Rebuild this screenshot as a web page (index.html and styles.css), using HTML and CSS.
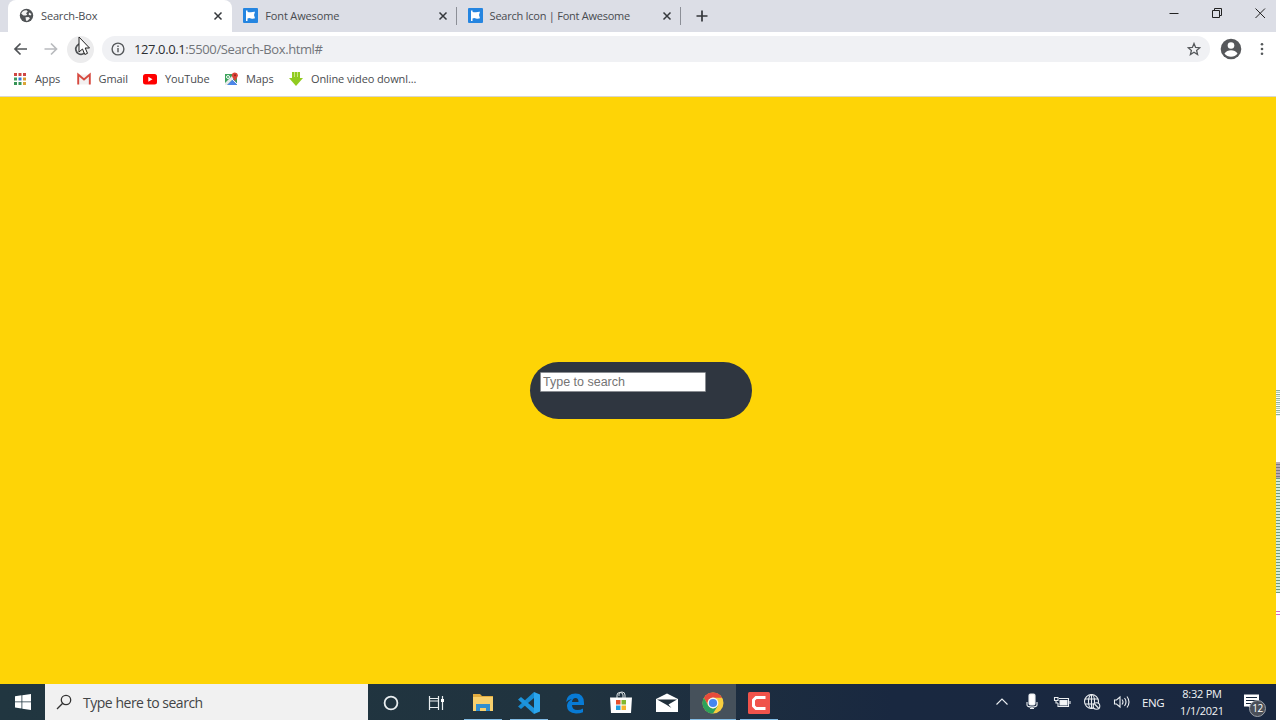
FILE: index.html
```html
<!DOCTYPE html>
<html lang="en">
<head>
<meta charset="utf-8">
<title>Search-Box</title>
<link rel="stylesheet" href="styles.css">
</head>
<body>
<div class="screen">
<div class="desktop">
  <header class="tabstrip">
    <div class="tab active">
      <svg class="fav" viewBox="0 0 15 15"><circle cx="7.500" cy="7.500" r="6.700" fill="#505356"/><path d="M2.200 5.500Q4 2 7.500 2.200L8.800 3.600 7 5.200l1.300 1.200L7 7.600H4.500L3.200 6.600zM10 4.500l2.500 1.600-1 1.400-1.800-.8zM6.500 9.300l3-.4 1.500 1.300-2.500 2.600H7z" fill="#f4f4f4"/></svg>
      <span class="title t1">Search-Box</span>
      <svg class="close" viewBox="0 0 10 10"><path d="M1.500 1.500l7 7m0-7l-7 7"/></svg>
    </div>
    <div class="tab">
      <svg class="fav" viewBox="0 0 15 15"><rect width="15" height="15" rx="1" fill="#2585e0"/><path d="M3 2.500h1.500v1.200Q6 4.700 8 4.200t4-.4L11 7l1 3.200Q10 11 8 10.400t-3.500.1V13H3z" fill="#fff"/></svg>
      <span class="title t2">Font Awesome</span>
      <svg class="close" viewBox="0 0 10 10"><path d="M1.500 1.500l7 7m0-7l-7 7"/></svg>
    </div>
    <div class="tab">
      <svg class="fav" viewBox="0 0 15 15"><rect width="15" height="15" rx="1" fill="#2585e0"/><path d="M3 2.500h1.500v1.200Q6 4.700 8 4.200t4-.4L11 7l1 3.200Q10 11 8 10.400t-3.500.1V13H3z" fill="#fff"/></svg>
      <span class="title t3">Search Icon | Font Awesome</span>
      <svg class="close" viewBox="0 0 10 10"><path d="M1.500 1.500l7 7m0-7l-7 7"/></svg>
    </div>
    <svg class="newtab" viewBox="0 0 12 12"><path d="M6 .5v11M.5 6h11"/></svg>
    <div class="wincontrols">
      <svg viewBox="0 0 12 12"><path d="M1.500 6.500h9"/></svg>
      <svg viewBox="0 0 12 12"><path d="M1.500 3.500h7v7h-7zM3.500 3.500v-2h7v7h-2"/></svg>
      <svg viewBox="0 0 12 12"><path d="M1.500 1.500l9.500 9.500m0-9.500l-9.500 9.500"/></svg>
    </div>
  </header>
  <div class="toolbar">
    <svg class="nav" viewBox="0 0 16 16"><path d="M14 8H2m5.500-5.500L2 8l5.500 5.500"/></svg>
    <svg class="nav forward" viewBox="0 0 16 16"><path d="M1.500 8h12M8 2.500l5.500 5.500L8 13.500"/></svg>
    <div class="reload"><svg class="nav" viewBox="0 0 16 16"><path d="M13 10A5.300 5.300 0 1 1 12 4.500"/></svg></div>
    <div class="omnibox">
      <svg class="info" viewBox="0 0 14 14"><circle cx="7" cy="7" r="5.900"/><path d="M7 6v4.300M7 3.600v1.400"/></svg>
      <span class="url"><b>127.0.0.1</b>:5500/Search-Box.html#</span>
      <svg class="star" viewBox="0 0 14 14"><path d="M7 1.500l1.600 3.900 4.200.3-3.200 2.700 1 4.100L7 10.300l-3.600 2.200 1-4.100L1.200 5.700l4.200-.3z"/></svg>
    </div>
    <svg class="avatar" viewBox="0 0 22 22"><circle cx="11" cy="11" r="10.300" fill="#56585b"/><circle cx="11" cy="7.500" r="3.300" fill="#fff"/><path d="M4.500 15.500Q7 12.300 11 12.300t6.500 3.200Q15 18.700 11 18.700t-6.500-3.200" fill="#fff"/></svg>
    <svg class="more" viewBox="0 0 4 14"><circle cx="2" cy="2.200" r="1.300"/><circle cx="2" cy="7" r="1.300"/><circle cx="2" cy="11.800" r="1.300"/></svg>
  </div>
  <nav class="bookmarks">
    <a class="bm apps"><svg viewBox="0 0 14 14"><path d="M1 1h3v3H1zM5.500 1h3v3h-3zM10 1h3v3h-3z" fill="#cf4643"/><path d="M1 5.500h3v3H1z" fill="#3c9a5b"/><path d="M5.500 5.500h3v3h-3z" fill="#3578d4"/><path d="M10 5.500h3v3h-3z" fill="#d99a32"/><path d="M1 10h3v3H1zM5.500 10h3v3h-3z" fill="#359456"/><path d="M10 10h3v3h-3z" fill="#daa638"/></svg><span>Apps</span></a>
    <a class="bm gmail"><svg viewBox="0 0 14 14"><path d="M1 2.500h12v10H1z" fill="#f3f0f0"/><path d="M1.200 12.500v-10L7 7.500l5.800-5v10" fill="none" stroke="#d64a40" stroke-width="1.900"/></svg><span>Gmail</span></a>
    <a class="bm youtube"><svg viewBox="0 0 14 14"><rect y="2" width="14" height="10.500" rx="2.500" fill="#f00"/><path d="M5.300 4.800v5L9.500 7.300z" fill="#fff"/></svg><span>YouTube</span></a>
    <a class="bm maps"><svg viewBox="0 0 14 14"><path d="M1 2h12v11H1z" fill="#3da45c"/><path d="M3 13l6-6 4 4v2z" fill="#4d86e8"/><path d="M1 11l8-8 2 2-8 8H1z" fill="#e8eaec"/><path d="M8 7l5 5" stroke="#f4f4f4"/><circle cx="4" cy="5" r="1.500" fill="none" stroke="#fff"/><path d="M11 9Q7.700 4.500 7.700 3.200a3.200 3.200 0 0 1 6.300 0Q14 4.500 11 9" fill="#dc4437"/><circle cx="11" cy="3.200" r="1" fill="#8f2424"/></svg><span>Maps</span></a>
    <a class="bm video"><svg viewBox="0 0 14 14"><path d="M3 0h8v6h3L7 14 0 6h3z" fill="#91cb20"/><path d="M5.500 0v5M8.500 0v5" stroke="#d8ef9a" stroke-width=".8"/></svg><span>Online video downl...</span></a>
  </nav>
  <main class="page">
    <div class="search-box"><input class="search-txt" type="text" placeholder="Type to search"></div>
  </main>
  <footer class="taskbar">
    <div class="start"><svg viewBox="0 0 16 16"><path d="M0 2.200l6.500-.9v6.200H0zM7.300 1.200L16 0v7.500H7.300zM0 8.300h6.500v6.200L0 13.600zM7.300 8.300H16V16l-8.700-1.300z" fill="#fff"/></svg></div>
    <div class="tasksearch"><svg viewBox="0 0 16 16"><circle cx="10" cy="6" r="4.700"/><path d="M6.700 9.300L1 15"/></svg><span>Type here to search</span></div>
    <div class="app a1"><svg viewBox="0 0 24 24"><circle cx="12" cy="12" r="6.400" fill="none" stroke="#e9eef0" stroke-width="1.800"/></svg></div>
    <div class="app a2"><svg viewBox="0 0 24 24"><path d="M5.500 5v2.500h9V5M5.500 19v-2.500h9V19M5.500 7.500v9m9-9v9M5.500 10h9M18.500 5v14" fill="none" stroke="#e9eef0" stroke-width="1.200"/><path d="M17 8h3v3h-3z" fill="#fff"/></svg></div>
    <div class="app a3"><svg viewBox="0 0 24 24"><path d="M2 3h7l2 2h11v15H2z" fill="#e2ac40"/><path d="M2 6h20v14H2z" fill="#f8d06d"/><path d="M5 20v-7h14v7h-4v-3H9v3z" fill="#328fd0"/></svg></div>
    <div class="app a4"><svg viewBox="0 0 24 24"><path d="M17 1l6 2.500v17L17 23z" fill="#2aa5ed"/><path d="M17 1v6L4 18l-3-2.500z" fill="#168bd2"/><path d="M17 23v-6L4 6 1 8.500z" fill="#1d94dc"/></svg></div>
    <div class="app a5"><svg viewBox="0 0 24 24"><path d="M3 11Q4 2.500 12.500 2.500 21 2.500 21 12v2H9q0 5 5.500 5 3 0 5.500-1.500v3.800Q17 22.500 13 22.500 4 22 4 15q0-4.500 5-7Q5.500 8.500 3 11m6 0h6.500q0-4-3-4T9 11" fill="#087bd5" fill-rule="evenodd"/></svg></div>
    <div class="app a6"><svg viewBox="0 0 24 24"><path d="M8 7V4q0-2.500 3-2.500t3 2.500v3M10 5V3q0-2 3-2t3 3v3" fill="none" stroke="#dce2e4"/><path d="M1 6.500h22l-1 15.500H2z" fill="#fff"/><path d="M7 9h4.500v4.500H7z" fill="#e6502c"/><path d="M12.500 9H17v4.500h-4.500z" fill="#82b82e"/><path d="M7 14.500h4.500V19H7z" fill="#209fe0"/><path d="M12.500 14.500H17V19h-4.500z" fill="#f5b62d"/></svg></div>
    <div class="app a7"><svg viewBox="0 0 24 24"><path d="M1 8l11-5.500L23 8v13H1z" fill="#fff"/><path d="M2 8.500h20l-8.500 5 3 3.500L11 13.500z" fill="#202f3b"/></svg></div>
    <div class="app a8 current"><svg viewBox="0 0 24 24"><circle cx="12" cy="12" r="10.500" fill="#f8ce3f"/><path d="M2.900 6.700A10.500 10.500 0 0 1 21.100 6.700H12A5.500 5.500 0 0 0 7.200 14.800z" fill="#e64b3c"/><path d="M2.900 6.700A10.500 10.500 0 0 0 12 22.500l4.800-7.700Q12 20 7.200 14.800z" fill="#2da25b"/><circle cx="12" cy="12" r="5.400" fill="#f4f6f7"/><circle cx="12" cy="12" r="4.100" fill="#4486ef"/></svg></div>
    <div class="app a9"><svg viewBox="0 0 24 24"><rect x="1" y="1" width="22" height="22" rx="1.500" fill="#f0534b"/><path d="M18.500 6.500H9L6.500 9v6L9 17.500h9.500" fill="none" stroke="#fff" stroke-width="3"/></svg></div>
    <div class="tray">
      <svg class="chev" viewBox="0 0 18 18"><path d="M3.500 11.500L9 6l5.500 5.500"/></svg>
      <svg class="mic" viewBox="0 0 18 18"><rect x="6" y="1" width="6" height="11" rx="1.500" fill="#fff"/><path d="M4 9v3q0 2 5 2t5-2V9M9 14v2M7 15.500h4"/></svg>
      <svg class="batt" viewBox="0 0 18 18"><path d="M6 5.500h9.500v8H5V10M3 8v2h2M1.500 4.500v3H5v-3zM17 8v3"/><path d="M7 7.500h7v4.500H7z" fill="#f3f5f6"/></svg>
      <svg class="globe" viewBox="0 0 18 18"><circle cx="8.500" cy="8.500" r="7"/><ellipse cx="8.500" cy="8.500" rx="3" ry="7"/><path d="M2 6h13M2 11h13M8.500 1.500v14"/><circle cx="13.500" cy="13" r="3.300" fill="#1b2a40"/><path d="M11.500 11l4 4"/></svg>
      <svg class="sound" viewBox="0 0 18 18"><path d="M1.500 7h2L7 4v10l-3.500-3h-2zM9 6.500q2 2.500 0 5M11.500 5q3 4 0 8M14 3.500q4 5.500 0 11"/></svg>
      <span class="lang">ENG</span>
      <div class="clock"><span class="time">8:32 PM</span><span class="date">1/1/2021</span></div>
      <div class="notice"><svg viewBox="0 0 18 18"><path d="M1 1.500h15v12H9V17l-3.500-3.500H1z" fill="#fff"/><path d="M3 4.500h11M3 7.500h11M3 10.500h7" stroke="#17263a"/></svg><span class="badge">12</span></div>
    </div>
  </footer>
</div>
<aside class="edge"><i class="noise n1"></i><i class="noise n2"></i><i class="noise n3"></i><i class="noise n4"></i></aside>
</div>
<svg class="cursor" viewBox="0 0 12 20"><path d="M1 1v15l3.500-3 2.300 5.500 2.700-1.200L7.200 12H11.500z" fill="#fff" stroke="#222" stroke-width="1"/></svg>
</body>
</html>
```
FILE: styles.css
```css
* { box-sizing: border-box; }
body { margin: 0; width: 1280px; height: 720px; overflow: hidden; font-family: "Open Sans", "Noto Sans", sans-serif; position: relative; }
svg { display: block; flex: none; }
span { white-space: nowrap; }
.screen { display: flex; height: 720px; background: #fff; }
.desktop { width: 1276px; display: flex; flex-direction: column; }

.tabstrip { height: 32px; background: #dcdee6; display: flex; padding-left: 8px; align-items: stretch; }
.tab { width: 224.300px; display: flex; align-items: center; padding: 0 8px 1px 11px; border-right: 1px solid transparent; position: relative; }
.tab::after { content: ""; position: absolute; right: -1px; top: 7px; width: 1px; height: 18px; background: #8c8f97; }
.active { background: #fff; border-radius: 8px 8px 0 0; }
.active::after { display: none; }
.fav { width: 15px; height: 15px; margin-right: 7px; }
.title { flex: 1; font-size: 11px; color: #484b50; }
.t1 { letter-spacing: -.15px; }
.t2 { letter-spacing: -.15px; }
.t3 { letter-spacing: -.25px; }
.close { width: 10px; height: 10px; stroke: #35383c; stroke-width: 1.500; }
.newtab { width: 12px; height: 12px; margin: 10px 0 0 15px; stroke: #33363a; stroke-width: 1.700; }
.wincontrols { margin-left: auto; display: flex; gap: 31px; padding: 7px 10px 0 0; }
.wincontrols svg { width: 12px; height: 12px; fill: none; stroke: #222; stroke-width: 1; }

.toolbar { height: 34px; display: flex; align-items: center; padding-left: 13px; }
.nav { width: 16px; height: 16px; fill: none; stroke: #505356; stroke-width: 1.700; }
.forward { margin-left: 14px; stroke: #b9bbbe; }
.reload { width: 27px; height: 27px; border-radius: 50%; background: #ececed; margin-left: 8px; display: grid; place-items: center; }
.omnibox { margin-left: 8px; width: 1108px; height: 26px; border-radius: 13px; background: #f0f1f4; display: flex; align-items: center; padding: 0 9px; }
.info { width: 14px; height: 14px; fill: none; stroke: #55585b; stroke-width: 1.400; margin-right: 9px; }
.url { font-size: 13px; color: #72757a; letter-spacing: -.4px; flex: 1; }
.url b { font-weight: 400; color: #2c2e31; }
.star { width: 14px; height: 14px; fill: none; stroke: #56595c; stroke-width: 1.300; }
.avatar { width: 22px; height: 22px; margin-left: 10px; }
.more { width: 4px; height: 14px; fill: #55585b; margin-left: 18px; }

.bookmarks { height: 31px; padding: 0 0 6px 13px; display: flex; align-items: center; border-bottom: 1px solid #d9d6cd; font-size: 11px; letter-spacing: -.1px; color: #4a4c4f; }
.bm { display: flex; align-items: center; gap: 8px; }
.bm svg { width: 14px; height: 14px; margin-top: 1px; }
.apps { width: 63.500px; }
.gmail { width: 66.500px; }
.youtube { width: 81px; }
.maps { width: 65px; }

.page { flex: 1; background: #fed406; display: flex; justify-content: center; padding: 265px 0 0 6px; }
.search-box { width: 222px; height: 57px; border-radius: 29px; background: #2f3640; padding: 10px; }
.search-txt { display: block; width: 166px; height: 20px; border: 1px solid #8a8d92; border-radius: 1px; background: #fff; padding: 0 2px; font: 12.500px "Liberation Sans", Arial, sans-serif; outline: none; }
.search-txt::placeholder { color: #757575; }

.taskbar { height: 36px; display: flex; background: linear-gradient(90deg, #213640 0, #20333f 45%, #192840 70%, #1a2840 100%); }
.start { width: 45px; display: grid; place-items: center; }
.start svg { width: 16px; height: 16px; }
.tasksearch { width: 323px; background: #f1f1f1; display: flex; align-items: center; padding-left: 11px; gap: 11px; font-size: 14px; letter-spacing: -.48px; color: #424446; }
.tasksearch svg { width: 16px; height: 16px; fill: none; stroke: #333; stroke-width: 1.300; }
.app { width: 46px; display: grid; place-items: center; padding-top: 1px; }
.app svg { width: 24px; height: 24px; }
.a1, .a2 { width: 45px; }
.a3, .a4, .a9 { background: linear-gradient(#83bde6, #83bde6) center bottom / 38px 1px no-repeat; }
.a3 { margin-left: 2px; }
.current { background: #46515b; box-shadow: inset 0 -1px #83bde6; }
.tray { margin-left: auto; display: flex; align-items: center; color: #f1f3f5; }
.tray > svg { width: 18px; height: 18px; fill: none; stroke: #eceff2; stroke-width: 1.100; margin-right: 12px; }
.tray > .sound { margin-right: 11px; }
.lang { width: 32px; font-size: 11.500px; letter-spacing: -.4px; }
.clock { width: 56px; display: flex; flex-direction: column; align-items: center; font-size: 11px; line-height: 17px; letter-spacing: -.25px; margin-top: -1px; }
.notice { width: 46px; padding-left: 13px; position: relative; }
.notice svg { width: 18px; height: 18px; }
.badge { position: absolute; left: 19px; top: 7px; width: 17px; height: 17px; border-radius: 50%; background: #4a4f58; border: 1px solid #9ca2aa; color: #fff; font-size: 10px; line-height: 15px; text-align: center; letter-spacing: -.4px; }

.edge { width: 4px; padding-top: 390px; }
.noise { display: block; background: repeating-linear-gradient(#8fae9d 0 1px, #e4f3e8 1px 2px, #abcab4 2px 3px, #fff 3px 4px); }
.n1 { height: 26px; }
.n2 { height: 16px; margin-top: 46px; background: repeating-linear-gradient(#b9adb5 0 2px, #7b7884 2px 3px); }
.n3 { height: 115px; background: repeating-linear-gradient(#6e9880 0 1px, #d2eddb 1px 3px); }
.n4 { height: 4px; margin-top: 18px; background: repeating-linear-gradient(#d56cc8 0 1px, #fff 1px 3px); }
.cursor { position: absolute; left: 78px; top: 36px; width: 12px; height: 20px; }
```
